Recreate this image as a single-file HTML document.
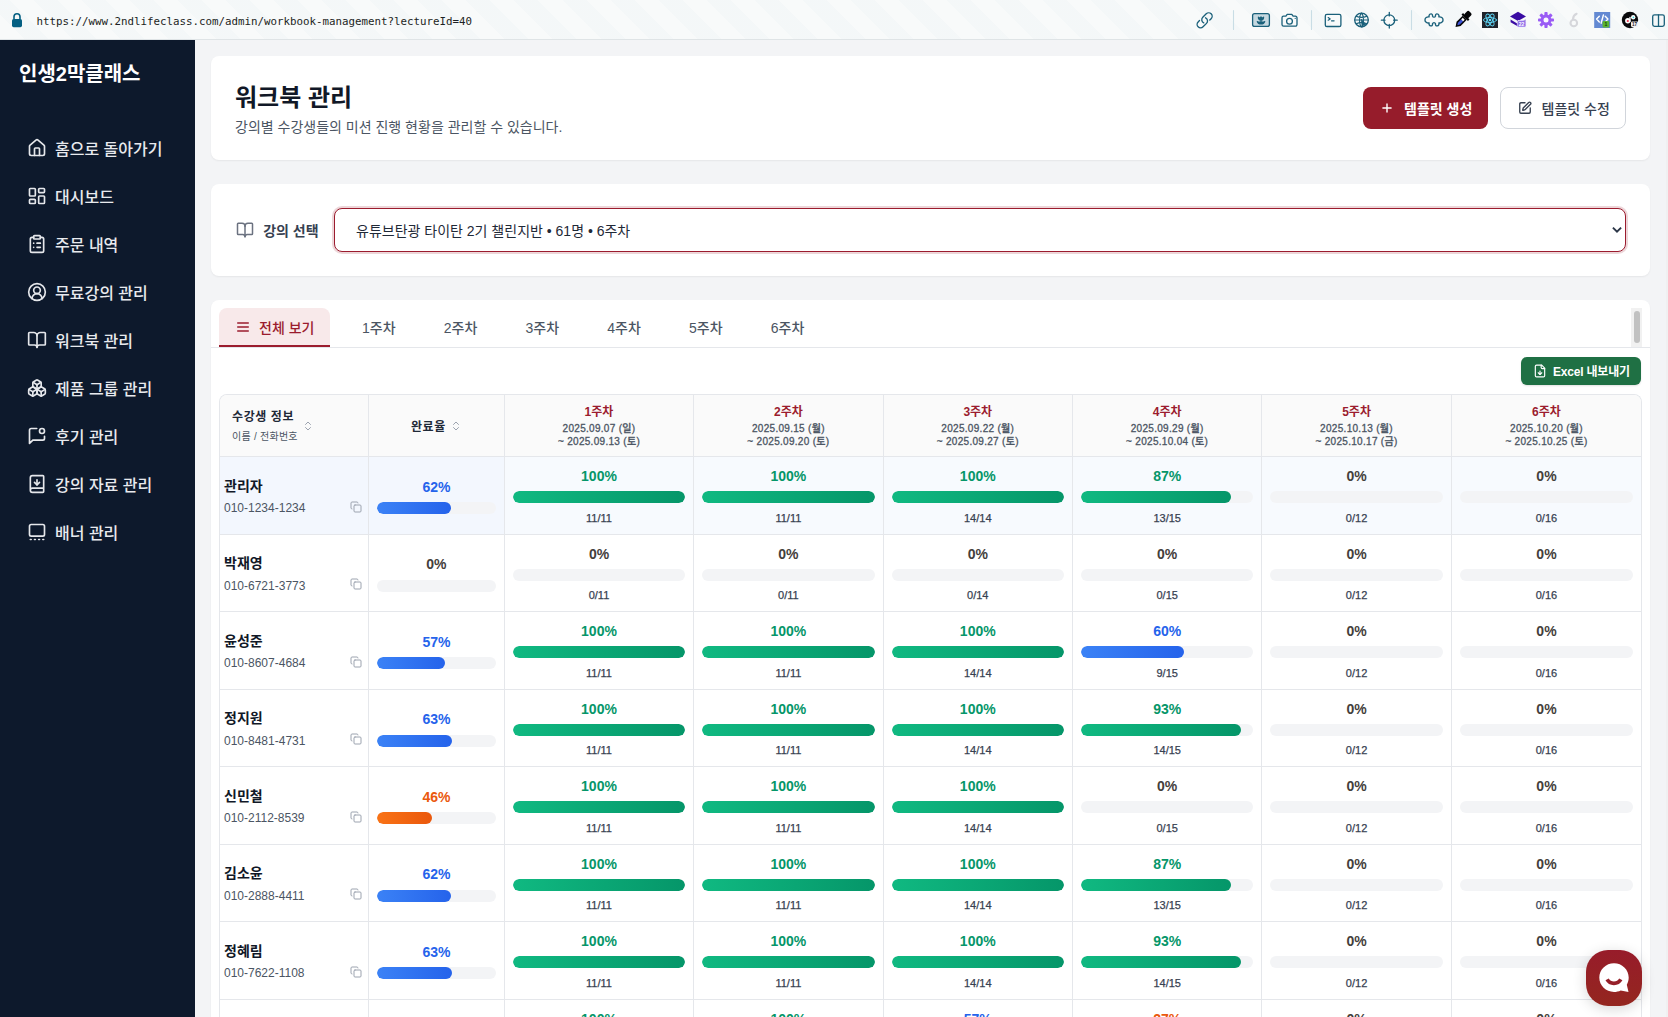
<!DOCTYPE html>
<html lang="ko">
<head>
<meta charset="utf-8">
<title>워크북 관리</title>
<style>
*{box-sizing:border-box;margin:0;padding:0}
html,body{width:1668px;height:1017px;overflow:hidden;background:#f3f4f6}
body{font-family:"Liberation Sans","Noto Sans CJK KR",sans-serif;color:#111827;position:relative;-webkit-font-smoothing:antialiased}
svg{display:block;flex:none}
/* browser bar */
.bar{position:absolute;left:0;top:0;width:1668px;height:40px;background:#f8fafa;border-bottom:1px solid #dfe4e6;
 background-image:repeating-linear-gradient(45deg,rgba(255,255,255,0) 0 17px,rgba(226,236,240,.18) 17px 34px);}
.url{position:absolute;left:36.5px;top:14.6px;font:10.8px/14px "DejaVu Sans Mono","Liberation Mono",monospace;color:#1c1f23;white-space:pre}
.lock{position:absolute;left:0;top:0}
.tb{position:absolute;top:0;height:40px}
.tb svg{position:absolute}
.sep{position:absolute;top:11px;width:1px;height:18px;background:#c6d3d9}
/* sidebar */
.side{position:absolute;left:0;top:40px;width:195px;height:977px;background:#0d192c;color:#e5e7eb}
.logo{position:absolute;left:19px;top:16px;font-size:20px;line-height:32px;font-weight:700;color:#fff;white-space:nowrap}
.mi{position:absolute;left:27px;height:24px;display:flex;align-items:center;font-size:16px;line-height:24px;font-weight:500;white-space:nowrap;color:#e8eaee}
.mi svg{margin-right:8px;color:#e5e7eb}
/* cards */
.card{position:absolute;left:211px;width:1439px;background:#fff;border-radius:8px;box-shadow:0 1px 2px rgba(0,0,0,.06)}
.c1{top:56px;height:104px}
.c2{top:184px;height:92px}
.c3{top:300px;height:760px}
h1{position:absolute;left:24px;top:24px;font-size:24px;line-height:32px;font-weight:700;color:#111827;white-space:nowrap}
.sub{position:absolute;left:24px;top:60px;font-size:14px;line-height:20px;color:#4b5563;white-space:nowrap}
.btn{position:absolute;top:31px;height:42px;border-radius:8px;display:flex;align-items:center;font-size:14px;line-height:20px;font-weight:500;white-space:nowrap;padding-left:16px}
.btn svg{margin-right:10px}
.b1{left:1152px;width:125px;background:#961c2b;color:#fff;font-weight:600;padding-left:17px}
.b2{left:1289px;width:126px;background:#fff;color:#374151;border:1px solid #d1d5db;padding-left:17px}
.b2 svg{margin-right:9.500px}
.lab{position:absolute;left:24px;top:36px;height:20px;display:flex;align-items:center;font-size:14px;line-height:20px;font-weight:600;color:#374151;white-space:nowrap}
.lab svg{margin:0 9.200px 0 1px;color:#6b7280}
.sel{position:absolute;left:123px;top:24px;width:1292px;height:44px;border:1px solid #9b1c2e;border-radius:8px;box-shadow:0 0 0 2px rgba(155,28,46,.18);
 font-size:14px;line-height:42px;padding-left:21px;color:#1f2937;white-space:nowrap;background:#fff}
.sel svg{position:absolute;right:2.200px;top:15px}
/* tabs */
.tabs{position:absolute;left:0;top:0;width:1439px;height:48px;border-bottom:1px solid #e5e7eb}
.tab{position:absolute;top:8px;height:39px;font-size:14px;line-height:20px;font-weight:500;color:#4b5563;display:flex;align-items:center;white-space:nowrap;padding-bottom:2px}
.tab.on{left:8px;width:111px;background:#f8e9ea;border-radius:8px 8px 0 0;border-bottom:2px solid #9b1c2e;color:#9b1c2e;padding:0 0 0 16px}
.tab.on svg{margin-right:8px}
.sb{position:absolute;left:1420px;top:8px;width:11px;height:39px;background:#f1f1f1}
.sb i{position:absolute;left:3px;top:3px;width:6px;height:32px;border-radius:3px;background:#c1c1c1}
.xl{position:absolute;left:1310px;top:57px;width:120px;height:28px;border-radius:6px;background:#1f7044;color:#fff;font-size:12px;line-height:16px;font-weight:600;display:flex;align-items:center;padding-left:12px;white-space:nowrap;box-shadow:0 1px 2px rgba(0,0,0,.12)}
.xl svg{margin-right:6px}
.xl span{letter-spacing:-.2px}
/* table */
.tw{position:absolute;left:8px;top:94px;width:1423px;height:700px;border:1px solid #e5e7eb;border-radius:8px 8px 0 0;border-bottom:0;overflow:hidden}
table{border-collapse:separate;border-spacing:0;table-layout:fixed;width:1421.2px}
th,td{border-right:1px solid #e5e7eb;border-bottom:1px solid #e5e7eb;vertical-align:middle;text-align:center}
th:last-child,td:last-child{border-right:0}
thead th{height:62px;background:#fafafa;font-size:12px;line-height:16px;font-weight:700;letter-spacing:.05em;color:#1f2937;padding:0}
tbody td{height:77.5px;padding:0 8px}
tbody tr.hv td{background:#f7fafe}
tbody tr.hv td.nm,tbody tr.hv td.tot{background:#f3f7fe}
.wk{color:#9b1c2e;font-size:12px;line-height:16px;font-weight:700;letter-spacing:0}
.dt{margin-top:2px;font-size:10px;line-height:13.33px;font-weight:500;color:#4b5563;letter-spacing:.3px;-webkit-text-stroke:.3px #4b5563}
.h1c{display:flex;align-items:center;padding-left:12px;text-align:left}
.h1c .s{font-size:10px;line-height:16px;font-weight:400;color:#4b5563;margin-top:5px;margin-bottom:-1px;letter-spacing:.025em}
.h1c svg,.h2c svg{color:#9ca3af;margin-left:4px}
.h2c{display:flex;align-items:center;justify-content:center}
td.nm{text-align:left;padding:0 0 0 4px;position:relative}
.n{font-size:14px;line-height:20px;font-weight:700;color:#111827}
.ph{font-size:12px;line-height:16px;color:#4b5563;margin-top:4px}
td.nm svg{position:absolute;right:6px;top:43.800px;color:#9ca3af}
.p{font-size:14px;line-height:20px;font-weight:700}
.bar2{height:12px;border-radius:6px;background:#f3f4f6;margin:6px 0;overflow:hidden}
.bar2 i{display:block;height:12px;border-radius:6px}
.ct{font-size:11px;line-height:16.5px;font-weight:500;color:#374151;-webkit-text-stroke:.25px #374151}
.g{color:#059669}.b{color:#2563eb}.o{color:#ea580c}.z{color:#44403c}
.g+.bar2 i{background:linear-gradient(90deg,#10b981,#059669)}
.b+.bar2 i{background:linear-gradient(90deg,#3b82f6,#2563eb)}
.o+.bar2 i{background:linear-gradient(90deg,#f97316,#ea580c)}
td.tot .bar2{margin-bottom:0}
td.tot .p{top:.700px}
td.nm .n{top:.5px}
/* baseline compensation: primary Latin font has smaller ascent than the CJK face */
.logo,h1,.sub{margin-top:.09em}
.mi span,.btn span,.lab span,.seltx,.tab span,.xl span,.wk,.dt,.h1c .tx,.h2c span,.n,.ph,.p,.ct{position:relative;top:.09em}
.edge{position:absolute;left:1666px;top:40px;width:2px;height:977px;background:#f0f0f1}
.mi span{top:2.440px}
/* chat */
.chat{position:absolute;left:1586px;top:950px;width:56px;height:56px;border-radius:22px;background:linear-gradient(180deg,#971c2a,#94261f);box-shadow:0 3px 14px rgba(0,0,0,.16)}
</style>
</head>
<body>

<div class="bar">
<svg class="lock" width="40" height="40" viewBox="0 0 40 40"><path d="M14 19.500v-2.700a3 3 0 0 1 6 0v2.700" fill="none" stroke="#045f82" stroke-width="1.600"/><rect x="12" y="18.900" width="10" height="8.300" rx="1.700" fill="#045f82"/></svg>
<div class="url">https://www.2ndlifeclass.com/admin/workbook-management?lectureId=40</div>
<svg class="tbsvg" width="1668" height="40" viewBox="0 0 1668 40" style="position:absolute;left:0;top:0" fill="none" stroke-linecap="round" stroke-linejoin="round">
<g stroke="#1a607a" stroke-width="1.300">
<!-- link -->
<g transform="translate(1195.400 11.100) scale(.77)" stroke-width="1.750"><path d="M13.190 8.688a4.500 4.500 0 0 1 1.242 7.244l-4.500 4.500a4.500 4.500 0 0 1-6.364-6.364l1.757-1.757m13.350-.622 1.757-1.757a4.500 4.500 0 0 0-6.364-6.364l-4.500 4.500a4.500 4.500 0 0 0 1.242 7.244"/></g>
<!-- image -->
<rect x="1252.600" y="13.600" width="16.800" height="12.800" rx="2" fill="#c5d8e0"/>
<path d="M1261 18.200v5.600M1258.400 17.200c0 1.700 1.100 2.800 2.600 2.800s2.600-1.100 2.600-2.800l-1.300 1-1.300-1.300-1.300 1.300zM1257.300 21.500c.6 1.700 1.900 2.500 3.700 2.500s3.100-.8 3.700-2.500" stroke-width="1.200" fill="#1a607a"/>
<!-- camera -->
<path d="M1283.600 16.200h2.300l1.300-1.900h4.600l1.300 1.900h2.300a1.600 1.600 0 0 1 1.600 1.600v6.800a1.600 1.600 0 0 1-1.600 1.600h-11.800a1.600 1.600 0 0 1-1.600-1.600v-6.800a1.600 1.600 0 0 1 1.600-1.600z"/><circle cx="1289.500" cy="21.300" r="2.900"/><path d="M1295.200 18.300h.01"/>
<!-- terminal -->
<rect x="1325.300" y="14.300" width="15.600" height="12.200" rx="1.600"/><path d="M1328.200 17.600l2 1.300-2 1.300M1331.500 20.800h2.600" stroke-width="1.200"/>
<!-- globe -->
<circle cx="1361.500" cy="20" r="6.800"/><path d="M1354.800 20h13.400M1361.500 13.200c-2.600 2-2.600 11.600 0 13.600M1361.500 13.200c2.600 2 2.600 11.600 0 13.600M1356.200 16.200c3 1.300 7.600 1.300 10.600 0M1356.200 23.800c3-1.300 7.600-1.300 10.600 0" stroke-width="1.100"/><path d="M1361.500 19.500l4.200 5.300-2.300.1-1 2.100z" fill="#1a607a" stroke-width=".8"/>
<!-- crosshair -->
<circle cx="1389.300" cy="20.200" r="5.400"/><path d="M1389.300 12.300v3.600M1389.300 24.500v3.600M1381.400 20.200h3.600M1393.600 20.200h3.600"/>
<!-- puzzle -->
<g transform="translate(1434 19.900) scale(.94 .9)"><path stroke-width="1.450" d="M-1.600-4.200C-1-2.600 1-2.600 1.600-4.200 1.200-6 2.400-6.800 3.400-6.600 5-6.400 5.600-5 5.200-3.400 7.600-3.800 9.600-2.200 9.600 0 9.600 2.200 7.600 3.800 5.200 3.400 5.600 5 5 6.400 3.400 6.600 2.400 6.800 1.200 6 1.600 4.200 1 2.600-1 2.600-1.600 4.200-1.200 6-2.400 6.800-3.400 6.600-5 6.400-5.600 5-5.200 3.400-7.600 3.800-9.600 2.200-9.600 0-9.600-2.200-7.600-3.800-5.200-3.400-5.600-5-5-6.400-3.400-6.600-2.400-6.800-1.200-6-1.600-4.200Z"/></g>
<!-- sidebar toggle -->
<rect x="1652.700" y="14.800" width="11.600" height="11.600" rx="1.800"/><path d="M1658.500 14.800v11.600"/>
</g>
<!-- separators -->
<path d="M1233.500 10.500v19M1311.500 10.500v19M1411.500 10.500v19" stroke="#c9dde5" stroke-width="1.100"/>
<!-- eyedropper -->
<g transform="translate(1462.600 19.900) rotate(45)"><rect x="-2.900" y="-10.800" width="5.800" height="6.400" rx="1.800" fill="#050507"/><rect x="-4.600" y="-5.300" width="9.200" height="2.400" rx=".7" fill="#050507"/><path d="M-2.900-3h5.800v8.600l-2.900 4.400-2.900-4.400z" fill="#050507"/><path d="M-1.300-1.600h2.600v2.400h-2.600z" fill="#fff"/><path d="M-1.300.8h2.600v4.500l-1.300 2.200-1.300-2.200z" fill="#3f55d8"/></g>
<!-- react -->
<rect x="1482" y="12" width="16" height="16" fill="#20232a"/>
<g stroke="#61dafb" stroke-width=".9"><ellipse cx="1490" cy="20" rx="6.600" ry="2.500"/><ellipse cx="1490" cy="20" rx="6.600" ry="2.500" transform="rotate(60 1490 20)"/><ellipse cx="1490" cy="20" rx="6.600" ry="2.500" transform="rotate(120 1490 20)"/></g><circle cx="1490" cy="20" r="1.300" fill="#61dafb"/>
<!-- layers purple -->
<path d="M1518 11.800l8 4.600-8 4.600-8-4.600z" fill="#3a0ca3"/><path d="M1510.600 19.600l7.400 4.300 7.400-4.300v2.600l-7.400 4.300-7.400-4.300z" fill="#3a0ca3"/>
<rect x="1517.300" y="20.600" width="8.600" height="6.400" rx="1.200" fill="#8f6fe8" stroke="#efe9ff" stroke-width=".6"/>
<text x="1521.600" y="25.600" font-family="Liberation Sans, sans-serif" font-size="5" font-weight="700" fill="#fff" text-anchor="middle">22</text>
<!-- gear -->
<g transform="translate(1546 20)" fill="#9a5cf5"><circle r="5.400"/><g><rect x="-1.600" y="-8" width="3.200" height="16" rx=".8"/><rect x="-1.600" y="-8" width="3.200" height="16" rx=".8" transform="rotate(45)"/><rect x="-1.600" y="-8" width="3.200" height="16" rx=".8" transform="rotate(90)"/><rect x="-1.600" y="-8" width="3.200" height="16" rx=".8" transform="rotate(135)"/></g><circle r="2.500" fill="#fbfaff"/></g>
<!-- gray six -->
<g stroke="#d6d7db" stroke-width="2.100"><circle cx="1573.800" cy="23" r="3.300"/><path d="M1573 19.200c.1-2.600 1.400-4.400 3.600-5.400"/></g>
<!-- code -->
<rect x="1594.200" y="12" width="16" height="16" fill="#6389d2"/>
<path d="M1599.300 16.200l-2.700 2.900 2.700 2.900M1605.200 16.200l2.700 2.900-2.700 2.900M1603.400 15l-2.300 8.200" stroke="#fff" stroke-width="1.400"/>
<rect x="1602.600" y="21" width="6.600" height="6.600" rx="1" fill="#5cb531"/>
<text x="1605.900" y="26.300" font-family="Liberation Sans, sans-serif" font-size="5" font-weight="700" fill="#143d05" text-anchor="middle">1</text>
<!-- avatar -->
<circle cx="1630" cy="20" r="8.200" fill="#0a0a0c"/>
<circle cx="1627.800" cy="20.800" r="2.700" fill="#fff"/><circle cx="1633.200" cy="17.300" r="2.200" fill="#fff"/><circle cx="1627.800" cy="21" r="1.100" fill="#e8304a"/><circle cx="1633.400" cy="17.300" r=".9" fill="#38d6e0"/><path d="M1630 17.500v4" stroke="#fff" stroke-width="1.300"/>
<rect x="1631" y="21.600" width="7.200" height="5.400" rx="1.200" fill="#f2f2f4"/>
<text x="1634.600" y="26" font-family="Liberation Sans, sans-serif" font-size="4.600" font-weight="700" fill="#222" text-anchor="middle">17</text>
</svg>

</div>
<div class="side"><div class="logo">인생2막클래스</div>
<div class="mi" style="top:96px"><svg class="" width="20" height="20" viewBox="0 0 24 24" fill="none" stroke="currentColor" stroke-width="2" stroke-linecap="round" stroke-linejoin="round" ><path d="M15 21v-8a1 1 0 0 0-1-1h-4a1 1 0 0 0-1 1v8"/><path d="M3 10a2 2 0 0 1 .709-1.528l7-5.999a2 2 0 0 1 2.582 0l7 5.999A2 2 0 0 1 21 10v9a2 2 0 0 1-2 2H5a2 2 0 0 1-2-2z"/></svg><span>홈으로 돌아가기</span></div>
<div class="mi" style="top:144px"><svg class="" width="20" height="20" viewBox="0 0 24 24" fill="none" stroke="currentColor" stroke-width="2" stroke-linecap="round" stroke-linejoin="round" ><rect width="7" height="9" x="3" y="3" rx="1"/><rect width="7" height="5" x="14" y="3" rx="1"/><rect width="7" height="9" x="14" y="12" rx="1"/><rect width="7" height="5" x="3" y="16" rx="1"/></svg><span>대시보드</span></div>
<div class="mi" style="top:192px"><svg class="" width="20" height="20" viewBox="0 0 24 24" fill="none" stroke="currentColor" stroke-width="2" stroke-linecap="round" stroke-linejoin="round" ><rect width="8" height="4" x="8" y="2" rx="1" ry="1"/><path d="M16 4h2a2 2 0 0 1 2 2v14a2 2 0 0 1-2 2H6a2 2 0 0 1-2-2V6a2 2 0 0 1 2-2h2"/><path d="M12 11h4"/><path d="M12 16h4"/><path d="M8 11h.01"/><path d="M8 16h.01"/></svg><span>주문 내역</span></div>
<div class="mi" style="top:240px"><svg class="" width="20" height="20" viewBox="0 0 24 24" fill="none" stroke="currentColor" stroke-width="2" stroke-linecap="round" stroke-linejoin="round" ><path d="M18 20a6 6 0 0 0-12 0"/><circle cx="12" cy="10" r="4"/><circle cx="12" cy="12" r="10"/></svg><span>무료강의 관리</span></div>
<div class="mi" style="top:288px"><svg class="" width="20" height="20" viewBox="0 0 24 24" fill="none" stroke="currentColor" stroke-width="2" stroke-linecap="round" stroke-linejoin="round" ><path d="M12 7v14"/><path d="M3 18a1 1 0 0 1-1-1V4a1 1 0 0 1 1-1h5a4 4 0 0 1 4 4 4 4 0 0 1 4-4h5a1 1 0 0 1 1 1v13a1 1 0 0 1-1 1h-6a3 3 0 0 0-3 3 3 3 0 0 0-3-3z"/></svg><span>워크북 관리</span></div>
<div class="mi" style="top:336px"><svg class="" width="20" height="20" viewBox="0 0 24 24" fill="none" stroke="currentColor" stroke-width="2" stroke-linecap="round" stroke-linejoin="round" ><path d="M2.97 12.92A2 2 0 0 0 2 14.63v3.24a2 2 0 0 0 .97 1.71l3 1.8a2 2 0 0 0 2.06 0L12 19v-5.5l-5-3-4.03 2.42Z"/><path d="m7 16.5-4.74-2.85"/><path d="m7 16.5 5-3"/><path d="M7 16.5v5.17"/><path d="M12 13.5V19l3.97 2.38a2 2 0 0 0 2.06 0l3-1.8a2 2 0 0 0 .97-1.71v-3.24a2 2 0 0 0-.97-1.71L17 10.5l-5 3Z"/><path d="m17 16.5-5-3"/><path d="m17 16.5 4.74-2.85"/><path d="M17 16.5v5.17"/><path d="M7.97 4.42A2 2 0 0 0 7 6.13v4.37l5 3 5-3V6.13a2 2 0 0 0-.97-1.71l-3-1.8a2 2 0 0 0-2.06 0l-3 1.8Z"/><path d="M12 8 7.26 5.15"/><path d="m12 8 4.74-2.85"/><path d="M12 13.5V8"/></svg><span>제품 그룹 관리</span></div>
<div class="mi" style="top:384px"><svg class="" width="20" height="20" viewBox="0 0 24 24" fill="none" stroke="currentColor" stroke-width="2" stroke-linecap="round" stroke-linejoin="round" ><path d="M11.7 3H5a2 2 0 0 0-2 2v16l4-4h12a2 2 0 0 0 2-2v-2.7"/><circle cx="18" cy="6" r="3"/></svg><span>후기 관리</span></div>
<div class="mi" style="top:432px"><svg class="" width="20" height="20" viewBox="0 0 24 24" fill="none" stroke="currentColor" stroke-width="2" stroke-linecap="round" stroke-linejoin="round" ><path d="M12 13V7"/><path d="M4 19.5v-15A2.5 2.5 0 0 1 6.5 2H19a1 1 0 0 1 1 1v18a1 1 0 0 1-1 1H6.5a1 1 0 0 1 0-5H20"/><path d="m9 10 3 3 3-3"/></svg><span>강의 자료 관리</span></div>
<div class="mi" style="top:480px"><svg class="" width="20" height="20" viewBox="0 0 24 24" fill="none" stroke="currentColor" stroke-width="2" stroke-linecap="round" stroke-linejoin="round" ><rect width="18" height="14" x="3" y="3" rx="2"/><path d="M4 21h1"/><path d="M9 21h1"/><path d="M14 21h1"/><path d="M19 21h1"/></svg><span>배너 관리</span></div>
</div>
<div class="card c1"><h1>워크북 관리</h1><div class="sub">강의별 수강생들의 미션 진행 현황을 관리할 수 있습니다.</div>
<div class="btn b1"><svg class="" width="14" height="14" viewBox="0 0 24 24" fill="none" stroke="currentColor" stroke-width="2.4" stroke-linecap="round" stroke-linejoin="round" ><path d="M5 12h14"/><path d="M12 5v14"/></svg><span>템플릿 생성</span></div>
<div class="btn b2"><svg class="" width="14" height="14" viewBox="0 0 24 24" fill="none" stroke="currentColor" stroke-width="2.3" stroke-linecap="round" stroke-linejoin="round" ><path d="M12 3H5a2 2 0 0 0-2 2v14a2 2 0 0 0 2 2h14a2 2 0 0 0 2-2v-7"/><path d="M18.375 2.625a1 1 0 0 1 3 3l-9.013 9.014a2 2 0 0 1-.853.505l-2.873.84a.5.5 0 0 1-.62-.62l.84-2.873a2 2 0 0 1 .506-.852z"/></svg><span>템플릿 수정</span></div></div>
<div class="card c2"><div class="lab"><svg class="" width="18" height="18" viewBox="0 0 24 24" fill="none" stroke="currentColor" stroke-width="2" stroke-linecap="round" stroke-linejoin="round" ><path d="M12 7v14"/><path d="M3 18a1 1 0 0 1-1-1V4a1 1 0 0 1 1-1h5a4 4 0 0 1 4 4 4 4 0 0 1 4-4h5a1 1 0 0 1 1 1v13a1 1 0 0 1-1 1h-6a3 3 0 0 0-3 3 3 3 0 0 0-3-3z"/></svg><span>강의 선택</span></div>
<div class="sel"><span class="seltx">유튜브탄광 타이탄 2기 챌린지반 • 61명 • 6주차</span><svg width="12" height="12" viewBox="0 0 12 12"><path d="M1.900 3.600 6 7.600l4.100-4" fill="none" stroke="#2b3647" stroke-width="1.900"/></svg></div></div>
<div class="card c3"><div class="tabs">
<div class="tab on"><svg class="" width="16" height="16" viewBox="0 0 24 24" fill="none" stroke="currentColor" stroke-width="2" stroke-linecap="round" stroke-linejoin="round" ><line x1="4" x2="20" y1="12" y2="12"/><line x1="4" x2="20" y1="6" y2="6"/><line x1="4" x2="20" y1="18" y2="18"/></svg><span>전체 보기</span></div>
<div class="tab" style="left:151.00px"><span>1주차</span></div>
<div class="tab" style="left:232.75px"><span>2주차</span></div>
<div class="tab" style="left:314.50px"><span>3주차</span></div>
<div class="tab" style="left:396.25px"><span>4주차</span></div>
<div class="tab" style="left:478.00px"><span>5주차</span></div>
<div class="tab" style="left:559.75px"><span>6주차</span></div>
<div class="sb"><i></i></div></div>
<div class="xl"><svg class="" width="14" height="14" viewBox="0 0 24 24" fill="none" stroke="currentColor" stroke-width="2" stroke-linecap="round" stroke-linejoin="round" ><path d="M15 2H6a2 2 0 0 0-2 2v16a2 2 0 0 0 2 2h12a2 2 0 0 0 2-2V7Z"/><path d="M14 2v4a2 2 0 0 0 2 2h4"/><path d="M12 18v-6"/><path d="m9 15 3 3 3-3"/></svg><span>Excel 내보내기</span></div>
<div class="tw"><table><colgroup><col style="width:149px"><col style="width:135.8px">
<col style="width:189.4px">
<col style="width:189.4px">
<col style="width:189.4px">
<col style="width:189.4px">
<col style="width:189.4px">
<col style="width:189.4px">
</colgroup><thead><tr>
<th><div class="h1c"><div><div class="tx">수강생 정보</div><div class="s tx">이름 / 전화번호</div></div><svg class="" width="12" height="12" viewBox="0 0 24 24" fill="none" stroke="currentColor" stroke-width="2" stroke-linecap="round" stroke-linejoin="round" ><path d="m7 15 5 5 5-5"/><path d="m7 9 5-5 5 5"/></svg></div></th>
<th><div class="h2c"><span>완료율</span><svg class="" width="12" height="12" viewBox="0 0 24 24" fill="none" stroke="currentColor" stroke-width="2" stroke-linecap="round" stroke-linejoin="round" ><path d="m7 15 5 5 5-5"/><path d="m7 9 5-5 5 5"/></svg></div></th>
<th><div class="wk">1주차</div><div class="dt">2025.09.07 (일)<br>~ 2025.09.13 (토)</div></th>
<th><div class="wk">2주차</div><div class="dt">2025.09.15 (월)<br>~ 2025.09.20 (토)</div></th>
<th><div class="wk">3주차</div><div class="dt">2025.09.22 (월)<br>~ 2025.09.27 (토)</div></th>
<th><div class="wk">4주차</div><div class="dt">2025.09.29 (월)<br>~ 2025.10.04 (토)</div></th>
<th><div class="wk">5주차</div><div class="dt">2025.10.13 (월)<br>~ 2025.10.17 (금)</div></th>
<th><div class="wk">6주차</div><div class="dt">2025.10.20 (월)<br>~ 2025.10.25 (토)</div></th>
</tr></thead><tbody>
<tr class=hv>
<td class="nm"><div class="n">관리자</div><div class="ph">010-1234-1234</div><svg class="" width="12" height="12" viewBox="0 0 24 24" fill="none" stroke="currentColor" stroke-width="2" stroke-linecap="round" stroke-linejoin="round" ><rect width="14" height="14" x="8" y="8" rx="2" ry="2"/><path d="M4 16c-1.1 0-2-.9-2-2V4c0-1.1.9-2 2-2h10c1.1 0 2 .9 2 2"/></svg></td>
<td class="tot"><div class="p b">62%</div><div class="bar2"><i style="width:62%"></i></div></td>
<td><div class="p g">100%</div><div class="bar2"><i style="width:100%"></i></div><div class="ct">11/11</div></td>
<td><div class="p g">100%</div><div class="bar2"><i style="width:100%"></i></div><div class="ct">11/11</div></td>
<td><div class="p g">100%</div><div class="bar2"><i style="width:100%"></i></div><div class="ct">14/14</div></td>
<td><div class="p g">87%</div><div class="bar2"><i style="width:87%"></i></div><div class="ct">13/15</div></td>
<td><div class="p z">0%</div><div class="bar2"><i style="width:0%"></i></div><div class="ct">0/12</div></td>
<td><div class="p z">0%</div><div class="bar2"><i style="width:0%"></i></div><div class="ct">0/16</div></td>
</tr>
<tr>
<td class="nm"><div class="n">박재영</div><div class="ph">010-6721-3773</div><svg class="" width="12" height="12" viewBox="0 0 24 24" fill="none" stroke="currentColor" stroke-width="2" stroke-linecap="round" stroke-linejoin="round" ><rect width="14" height="14" x="8" y="8" rx="2" ry="2"/><path d="M4 16c-1.1 0-2-.9-2-2V4c0-1.1.9-2 2-2h10c1.1 0 2 .9 2 2"/></svg></td>
<td class="tot"><div class="p z">0%</div><div class="bar2"><i style="width:0%"></i></div></td>
<td><div class="p z">0%</div><div class="bar2"><i style="width:0%"></i></div><div class="ct">0/11</div></td>
<td><div class="p z">0%</div><div class="bar2"><i style="width:0%"></i></div><div class="ct">0/11</div></td>
<td><div class="p z">0%</div><div class="bar2"><i style="width:0%"></i></div><div class="ct">0/14</div></td>
<td><div class="p z">0%</div><div class="bar2"><i style="width:0%"></i></div><div class="ct">0/15</div></td>
<td><div class="p z">0%</div><div class="bar2"><i style="width:0%"></i></div><div class="ct">0/12</div></td>
<td><div class="p z">0%</div><div class="bar2"><i style="width:0%"></i></div><div class="ct">0/16</div></td>
</tr>
<tr>
<td class="nm"><div class="n">윤성준</div><div class="ph">010-8607-4684</div><svg class="" width="12" height="12" viewBox="0 0 24 24" fill="none" stroke="currentColor" stroke-width="2" stroke-linecap="round" stroke-linejoin="round" ><rect width="14" height="14" x="8" y="8" rx="2" ry="2"/><path d="M4 16c-1.1 0-2-.9-2-2V4c0-1.1.9-2 2-2h10c1.1 0 2 .9 2 2"/></svg></td>
<td class="tot"><div class="p b">57%</div><div class="bar2"><i style="width:57%"></i></div></td>
<td><div class="p g">100%</div><div class="bar2"><i style="width:100%"></i></div><div class="ct">11/11</div></td>
<td><div class="p g">100%</div><div class="bar2"><i style="width:100%"></i></div><div class="ct">11/11</div></td>
<td><div class="p g">100%</div><div class="bar2"><i style="width:100%"></i></div><div class="ct">14/14</div></td>
<td><div class="p b">60%</div><div class="bar2"><i style="width:60%"></i></div><div class="ct">9/15</div></td>
<td><div class="p z">0%</div><div class="bar2"><i style="width:0%"></i></div><div class="ct">0/12</div></td>
<td><div class="p z">0%</div><div class="bar2"><i style="width:0%"></i></div><div class="ct">0/16</div></td>
</tr>
<tr>
<td class="nm"><div class="n">정지원</div><div class="ph">010-8481-4731</div><svg class="" width="12" height="12" viewBox="0 0 24 24" fill="none" stroke="currentColor" stroke-width="2" stroke-linecap="round" stroke-linejoin="round" ><rect width="14" height="14" x="8" y="8" rx="2" ry="2"/><path d="M4 16c-1.1 0-2-.9-2-2V4c0-1.1.9-2 2-2h10c1.1 0 2 .9 2 2"/></svg></td>
<td class="tot"><div class="p b">63%</div><div class="bar2"><i style="width:63%"></i></div></td>
<td><div class="p g">100%</div><div class="bar2"><i style="width:100%"></i></div><div class="ct">11/11</div></td>
<td><div class="p g">100%</div><div class="bar2"><i style="width:100%"></i></div><div class="ct">11/11</div></td>
<td><div class="p g">100%</div><div class="bar2"><i style="width:100%"></i></div><div class="ct">14/14</div></td>
<td><div class="p g">93%</div><div class="bar2"><i style="width:93%"></i></div><div class="ct">14/15</div></td>
<td><div class="p z">0%</div><div class="bar2"><i style="width:0%"></i></div><div class="ct">0/12</div></td>
<td><div class="p z">0%</div><div class="bar2"><i style="width:0%"></i></div><div class="ct">0/16</div></td>
</tr>
<tr>
<td class="nm"><div class="n">신민철</div><div class="ph">010-2112-8539</div><svg class="" width="12" height="12" viewBox="0 0 24 24" fill="none" stroke="currentColor" stroke-width="2" stroke-linecap="round" stroke-linejoin="round" ><rect width="14" height="14" x="8" y="8" rx="2" ry="2"/><path d="M4 16c-1.1 0-2-.9-2-2V4c0-1.1.9-2 2-2h10c1.1 0 2 .9 2 2"/></svg></td>
<td class="tot"><div class="p o">46%</div><div class="bar2"><i style="width:46%"></i></div></td>
<td><div class="p g">100%</div><div class="bar2"><i style="width:100%"></i></div><div class="ct">11/11</div></td>
<td><div class="p g">100%</div><div class="bar2"><i style="width:100%"></i></div><div class="ct">11/11</div></td>
<td><div class="p g">100%</div><div class="bar2"><i style="width:100%"></i></div><div class="ct">14/14</div></td>
<td><div class="p z">0%</div><div class="bar2"><i style="width:0%"></i></div><div class="ct">0/15</div></td>
<td><div class="p z">0%</div><div class="bar2"><i style="width:0%"></i></div><div class="ct">0/12</div></td>
<td><div class="p z">0%</div><div class="bar2"><i style="width:0%"></i></div><div class="ct">0/16</div></td>
</tr>
<tr>
<td class="nm"><div class="n">김소윤</div><div class="ph">010-2888-4411</div><svg class="" width="12" height="12" viewBox="0 0 24 24" fill="none" stroke="currentColor" stroke-width="2" stroke-linecap="round" stroke-linejoin="round" ><rect width="14" height="14" x="8" y="8" rx="2" ry="2"/><path d="M4 16c-1.1 0-2-.9-2-2V4c0-1.1.9-2 2-2h10c1.1 0 2 .9 2 2"/></svg></td>
<td class="tot"><div class="p b">62%</div><div class="bar2"><i style="width:62%"></i></div></td>
<td><div class="p g">100%</div><div class="bar2"><i style="width:100%"></i></div><div class="ct">11/11</div></td>
<td><div class="p g">100%</div><div class="bar2"><i style="width:100%"></i></div><div class="ct">11/11</div></td>
<td><div class="p g">100%</div><div class="bar2"><i style="width:100%"></i></div><div class="ct">14/14</div></td>
<td><div class="p g">87%</div><div class="bar2"><i style="width:87%"></i></div><div class="ct">13/15</div></td>
<td><div class="p z">0%</div><div class="bar2"><i style="width:0%"></i></div><div class="ct">0/12</div></td>
<td><div class="p z">0%</div><div class="bar2"><i style="width:0%"></i></div><div class="ct">0/16</div></td>
</tr>
<tr>
<td class="nm"><div class="n">정혜림</div><div class="ph">010-7622-1108</div><svg class="" width="12" height="12" viewBox="0 0 24 24" fill="none" stroke="currentColor" stroke-width="2" stroke-linecap="round" stroke-linejoin="round" ><rect width="14" height="14" x="8" y="8" rx="2" ry="2"/><path d="M4 16c-1.1 0-2-.9-2-2V4c0-1.1.9-2 2-2h10c1.1 0 2 .9 2 2"/></svg></td>
<td class="tot"><div class="p b">63%</div><div class="bar2"><i style="width:63%"></i></div></td>
<td><div class="p g">100%</div><div class="bar2"><i style="width:100%"></i></div><div class="ct">11/11</div></td>
<td><div class="p g">100%</div><div class="bar2"><i style="width:100%"></i></div><div class="ct">11/11</div></td>
<td><div class="p g">100%</div><div class="bar2"><i style="width:100%"></i></div><div class="ct">14/14</div></td>
<td><div class="p g">93%</div><div class="bar2"><i style="width:93%"></i></div><div class="ct">14/15</div></td>
<td><div class="p z">0%</div><div class="bar2"><i style="width:0%"></i></div><div class="ct">0/12</div></td>
<td><div class="p z">0%</div><div class="bar2"><i style="width:0%"></i></div><div class="ct">0/16</div></td>
</tr>
<tr>
<td class="nm"><div class="n">이수진</div><div class="ph">010-3345-9921</div><svg class="" width="12" height="12" viewBox="0 0 24 24" fill="none" stroke="currentColor" stroke-width="2" stroke-linecap="round" stroke-linejoin="round" ><rect width="14" height="14" x="8" y="8" rx="2" ry="2"/><path d="M4 16c-1.1 0-2-.9-2-2V4c0-1.1.9-2 2-2h10c1.1 0 2 .9 2 2"/></svg></td>
<td class="tot"><div class="p o">43%</div><div class="bar2"><i style="width:43%"></i></div></td>
<td><div class="p g">100%</div><div class="bar2"><i style="width:100%"></i></div><div class="ct">11/11</div></td>
<td><div class="p g">100%</div><div class="bar2"><i style="width:100%"></i></div><div class="ct">11/11</div></td>
<td><div class="p b">57%</div><div class="bar2"><i style="width:57%"></i></div><div class="ct">8/14</div></td>
<td><div class="p o">27%</div><div class="bar2"><i style="width:27%"></i></div><div class="ct">4/15</div></td>
<td><div class="p z">0%</div><div class="bar2"><i style="width:0%"></i></div><div class="ct">0/12</div></td>
<td><div class="p z">0%</div><div class="bar2"><i style="width:0%"></i></div><div class="ct">0/16</div></td>
</tr>
</tbody></table></div></div>
<div class="edge"></div>
<div class="chat"><svg width="56" height="56" viewBox="0 0 56 56"><path d="M28 13.2c8.1 0 14.7 6.4 14.7 14.4 0 2.6-.7 5-1.9 7.100l1.700 7.300-7.800-1.500c-2 .95-4.300 1.500-6.700 1.500-8.100 0-14.700-6.400-14.700-14.400S19.900 13.200 28 13.200z" fill="#fff"/><path d="M21.100 29.400c1.400 2.500 3.800 3.900 6.800 3.900s5.500-1.400 6.900-3.900" fill="none" stroke="#96202a" stroke-width="3.700" stroke-linecap="butt"/></svg></div>
</body></html>
